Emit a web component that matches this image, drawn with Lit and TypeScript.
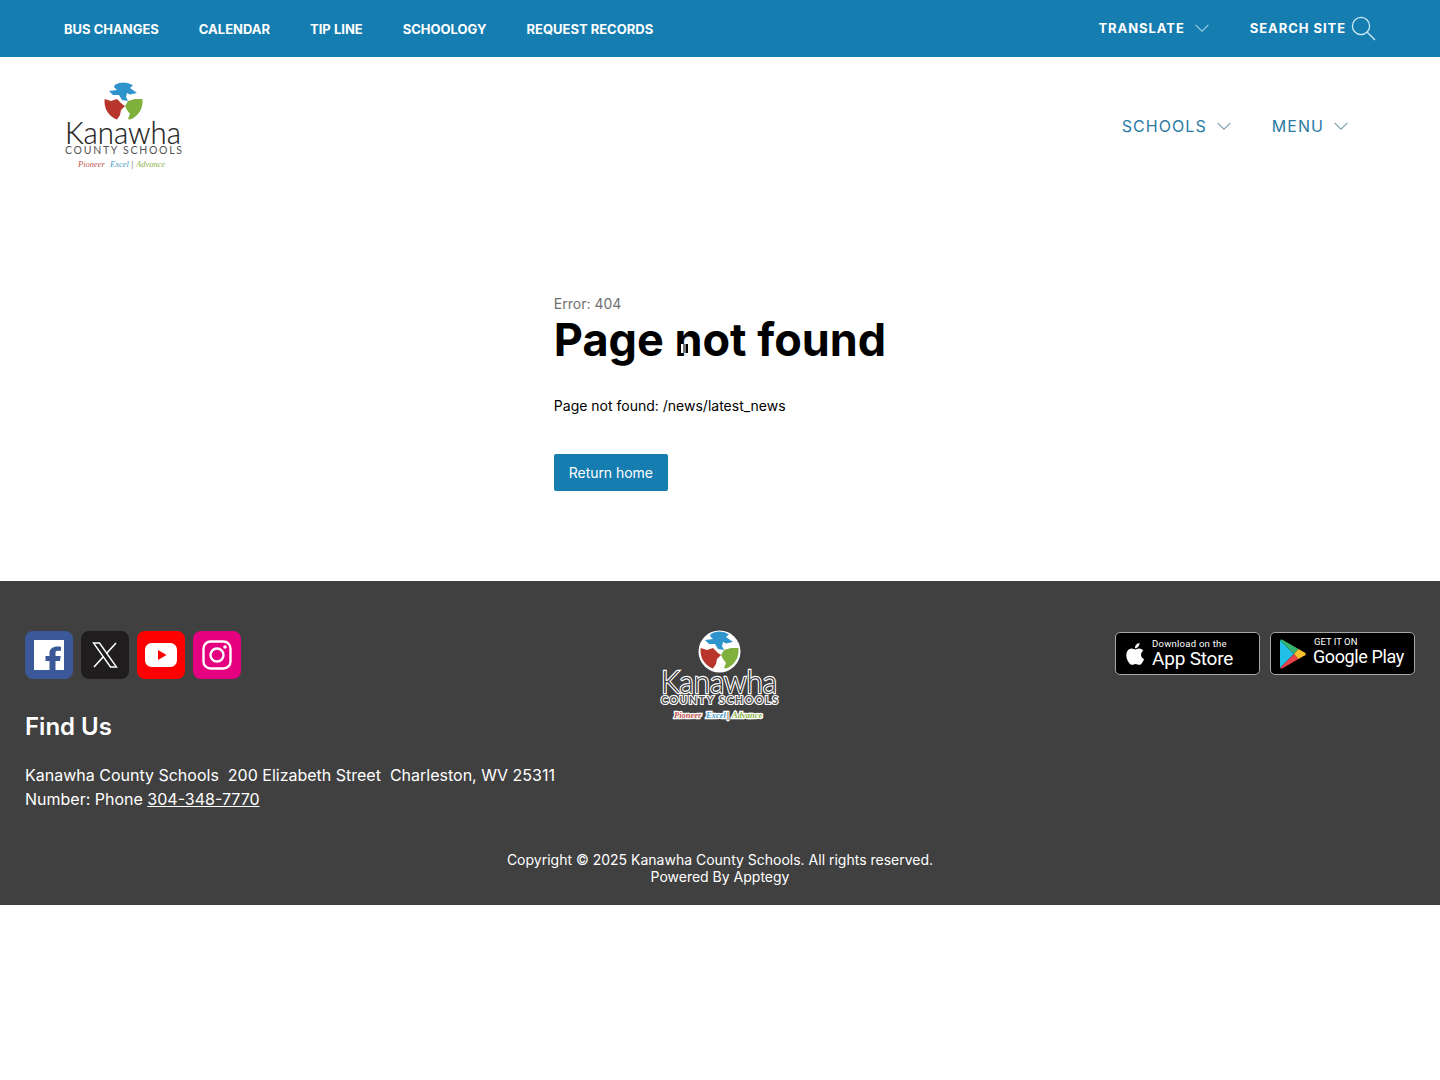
import { LitElement, html, css, svg } from "lit";
import { customElement, property } from "lit/decorators.js";

const chevron = (cls: string) => html`<svg class=${cls} viewBox="0 0 14 8" fill="none" stroke="currentColor" stroke-width="1.1"><path d="M.6.8 7 7.2 13.4.8"/></svg>`;

@customElement("ks-logo")
class KsLogo extends LitElement {
  @property({ type: Boolean }) dark = false;
  static styles = css`
    :host { display: block; width: 120px; height: 90px; }
    svg { display: block; width: 120px; height: 90px; overflow: visible; }
    .name { font: 300 32px "Lato", sans-serif; fill: #222; stroke: #222; stroke-width: .2px; }
    .sub { font: 400 10.5px "Lato", sans-serif; fill: #555; }
    .tag { font: italic 400 8.5px "Liberation Serif", serif; }
    .dark .name { fill: #3a3a3a; stroke: #fff; stroke-width: 2.4px; paint-order: stroke; }
    .dark .sub { fill: #555; font-weight: 700; stroke: #fff; stroke-width: 2.2px; paint-order: stroke; }
    .dark .tag { font-weight: 700; stroke: #fff; stroke-width: 2.4px; paint-order: stroke; }
  `;
  render() {
    const subY = this.dark ? 73 : 71.5;
    const tagY = this.dark ? 87 : 85;
    return html`<svg viewBox=${this.dark ? "-1 0 120 90" : "0 0 120 90"} class=${this.dark ? "dark" : ""}>
      ${this.dark ? svg`<circle cx="58.5" cy="20.5" r="21" fill="#fff"/>` : ""}
      <path fill="#2f93cc" d="M50 2.800A19 19 0 0 1 68 3.300L65 6 72 11 65 12.500 62 11 61 15 63 19 57 18 54 13 48 13 44 9 52 8 49 5Z"/>
      <path fill="#b8352c" d="M39.700 17 46 19 52 17 57 22 60 24 56 28 55 33 52 37.600A19 19 0 0 1 39.700 17Z"/>
      <path fill="#7fb03c" d="M60 24 63 19 70 17 77.400 17A19 19 0 0 1 65 37.500L63 37 65 32 62 28Z"/>
      <text class="name" x="0" y="61.500" textLength="116" lengthAdjust="spacingAndGlyphs">Kanawha</text>
      <text class="sub" x="0" y=${subY} textLength="117">COUNTY SCHOOLS</text>
      <text class="tag" x="13" y=${tagY} fill="#c0564e">Pioneer</text>
      <text class="tag" x="45" y=${tagY} fill="#4a9bc9">Excel</text>
      <text class="tag" x="66" y=${tagY} fill="#333">|</text>
      <text class="tag" x="71" y=${tagY} fill="#8cb34a">Advance</text>
    </svg>`;
  }
}

@customElement("app-root")
class AppRoot extends LitElement {
  static styles = css`
    :host { display: block; font-family: "Inter", "Liberation Sans", sans-serif; color: #000; }
    a { color: inherit; text-decoration: none; }
    .top { height: 57px; box-sizing: border-box; background: #157db0; color: #fff; display: flex; align-items: center; justify-content: space-between; padding: 0 64px; }
    .top nav { display: flex; gap: 40px; font-size: 13px; font-weight: 700; }
    .tools { display: flex; align-items: center; font-size: 13px; font-weight: 700; letter-spacing: .95px; margin-top: -1px; }
    .tools .chev { width: 14px; height: 8px; margin-left: 10px; margin-right: 41px; color: #9fd0ea; }
    .tools .search { width: 25px; height: 25px; margin-left: 5px; color: #cfe8f5; }
    .head { height: 138px; box-sizing: border-box; display: flex; align-items: flex-start; justify-content: space-between; padding: 25px 92px 0 65px; }
    .menus { display: flex; gap: 41px; margin-top: 34px; color: #2b7ba3; font-size: 16px; letter-spacing: 1.05px; line-height: 20px; }
    .menus a { display: flex; align-items: center; }
    .menus .chev { width: 14px; height: 8px; margin-left: 10px; color: #7c9fb2; }
    main { height: 386px; display: flex; justify-content: center; position: relative; }
    .box { padding-top: 100px; }
    .err { font-size: 14px; line-height: 18px; color: #707070; }
    h1 { margin: 0; font-size: 45px; line-height: 54px; font-weight: 700; white-space: nowrap; }
    .msg { margin: 29px 0 0; font-size: 14px; line-height: 20px; }
    .btn { display: inline-flex; align-items: center; height: 37px; padding: 0 15px; margin-top: 38px; background: #157db0; color: #fff; font-size: 14px; letter-spacing: -.06px; border-radius: 2px; }
    .cursor { position: absolute; left: 681px; top: 149px; height: 9px; display: flex; }
    .cursor i { display: block; width: 2px; background: #fff; }
    .cursor i:nth-child(2) { width: 3px; background: #777; }
    .cursor i:nth-child(3) { background: #000; }
    footer { height: 324px; box-sizing: border-box; background: #404040; color: #fff; padding: 50px 25px 0; display: flex; flex-direction: column; }
    .cols { display: grid; grid-template-columns: 1fr auto 1fr; }
    .social { display: flex; gap: 8px; }
    .social a { width: 48px; height: 48px; border-radius: 8px; display: flex; align-items: center; justify-content: center; }
    .fb { background: #3b5998; } .x { background: #1f1d1d; } .yt { background: #f00; } .ig { background: #e4007f; }
    h2 { margin: 32px 0 0; font-size: 24px; line-height: 32px; font-weight: 600; }
    .addr { margin: 20px 0 0; font-size: 16px; line-height: 24px; white-space: pre; }
    .addr a { text-decoration: underline; }
    .stores { display: flex; justify-content: flex-end; gap: 10px; padding-top: 1px; }
    .store { width: 145px; height: 43px; box-sizing: border-box; background: #000; border: 1px solid #a6a6a6; border-radius: 5px; display: flex; align-items: center; }
    .store svg { flex: none; }
    .st { display: flex; flex-direction: column; font-family: "Roboto", "Inter", sans-serif; }
    .st small { font-size: 9.5px; line-height: 10px; letter-spacing: .25px; }
    .st b { font-weight: 400; font-size: 19px; line-height: 19px; letter-spacing: -.2px; white-space: nowrap; }
    .st.gp { margin-top: -3px; }
    .st.gp small { letter-spacing: 0; }
    .st.gp b { font-size: 18px; line-height: 20px; letter-spacing: -.4px; margin-left: -1px; }
    .apple { margin-left: 7px; margin-right: 7px; }
    .play { margin-left: 9px; margin-right: 8px; }
    .copy { margin-top: 40px; text-align: center; font-size: 14px; line-height: 17px; }
  `;
  render() {
    return html`
      <div class="top">
        <nav>
          <a>BUS CHANGES</a><a>CALENDAR</a><a>TIP LINE</a><a>SCHOOLOGY</a><a>REQUEST RECORDS</a>
        </nav>
        <div class="tools">
          <span>TRANSLATE</span>${chevron("chev")}
          <span>SEARCH SITE</span>
          <svg class="search" viewBox="0 0 25 25" fill="none" stroke="currentColor" stroke-width="1.3"><circle cx="10" cy="10" r="8.6"/><path d="m16.2 16.2 7.8 7.8"/></svg>
        </div>
      </div>
      <div class="head">
        <ks-logo></ks-logo>
        <div class="menus">
          <a>SCHOOLS${chevron("chev")}</a>
          <a>MENU${chevron("chev")}</a>
        </div>
      </div>
      <main>
        <div class="box">
          <div class="err">Error: 404</div>
          <h1>Page not found</h1>
          <p class="msg">Page not found: /news/latest_news</p>
          <a class="btn">Return home</a>
        </div>
        <div class="cursor"><i></i><i></i><i></i></div>
      </main>
      <footer>
        <div class="cols">
          <div>
            <div class="social">
              <a class="fb"><svg width="30" height="30" viewBox="0 0 30 30"><rect width="30" height="30" fill="#fff"/><path fill="#3b5998" d="M21.500 30V21H26l.7-5h-5.200v-3c0-1.500.5-2.300 2.400-2.300H27V6.700c-.6-.1-2-.2-3.500-.2-4.500 0-8 2.200-8 6.500V16h-4v5h4v9z"/></svg></a>
              <a class="x"><svg width="28" height="28" viewBox="0 0 28 28" fill="none" stroke="#fff"><path stroke-width="1.4" d="M2.500 2h6l17 24h-6z"/><path stroke-width="1.6" d="M25 2 15.500 12.500M12.500 15.500 3 26"/></svg></a>
              <a class="yt"><svg width="32" height="24" viewBox="0 0 32 24"><rect width="32" height="24" rx="6.500" fill="#fff"/><path fill="#f00" d="m13 7 8.500 5-8.500 5z"/></svg></a>
              <a class="ig"><svg width="30" height="30" viewBox="0 0 30 30" fill="none" stroke="#fff" stroke-width="2.400"><rect x="1.500" y="1.500" width="27" height="27" rx="7"/><circle cx="15" cy="15" r="6.500"/><circle cx="23" cy="7" r="1.800" fill="#fff" stroke="none"/></svg></a>
            </div>
            <h2>Find Us</h2>
            <p class="addr">Kanawha County Schools  200 Elizabeth Street  Charleston, WV 25311
Number: Phone <a>304-348-7770</a></p>
          </div>
          <ks-logo dark></ks-logo>
          <div class="stores">
            <a class="store">
              <svg class="apple" width="22" height="26" viewBox="0 0 20 24"><path fill="#fff" d="M16.500 12.700c0-2.500 2-3.700 2.100-3.800-1.200-1.700-3-1.900-3.600-2-1.500-.2-3 .9-3.800.9s-2-.9-3.300-.9c-1.700 0-3.300 1-4.100 2.500-1.800 3.100-.5 7.600 1.200 10.100.9 1.200 1.900 2.600 3.200 2.500 1.300 0 1.800-.8 3.300-.8s2 .8 3.300.8c1.400 0 2.200-1.200 3.100-2.500 1-1.400 1.400-2.800 1.400-2.900-.1 0-2.800-1-2.800-4zM14 5.200c.7-.9 1.200-2.100 1-3.300-1 0-2.300.7-3 1.500-.7.800-1.200 2-1.100 3.200 1.200.1 2.400-.6 3.100-1.400z"/></svg>
              <div class="st"><small>Download on the</small><b>App Store</b></div>
            </a>
            <a class="store">
              <svg class="play" width="26" height="30" viewBox="0 0 26 30">
                <path fill="#22bfe8" d="M0 1v28l14-14z"/>
                <path fill="#35b36f" d="M0 1c.5-.7 1.500-.8 2.500-.2L18.500 10 14 15z"/>
                <path fill="#e8434b" d="M0 29c.5.700 1.500.800 2.500.200L18.500 20 14 15z"/>
                <path fill="#fbc02d" d="m18.500 10 6.500 3.700c1 .7 1 1.900 0 2.600L18.500 20 14 15z"/>
              </svg>
              <div class="st gp"><small>GET IT ON</small><b>Google Play</b></div>
            </a>
          </div>
        </div>
        <div class="copy">Copyright © 2025 Kanawha County Schools. All rights reserved.<br>Powered By Apptegy</div>
      </footer>
    `;
  }
}
